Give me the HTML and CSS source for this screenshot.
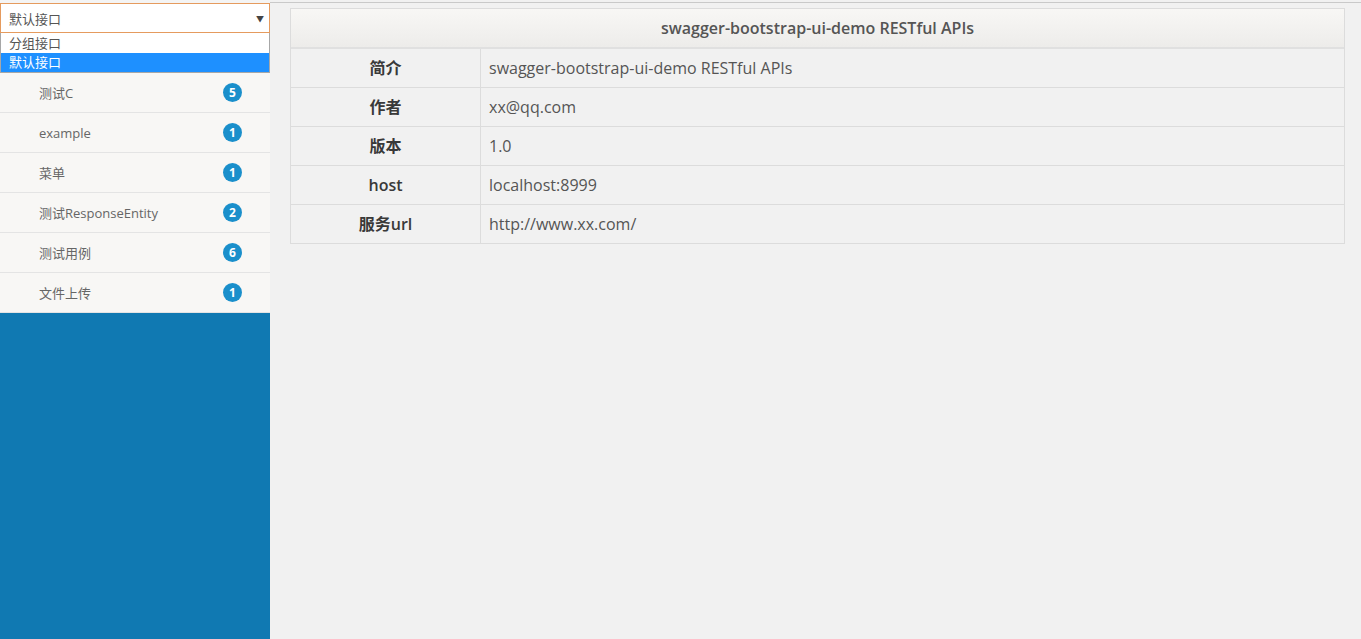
FILE: index.html
```html
<!DOCTYPE html>
<html>
<head>
    <title>swagger-bootstrap-ui</title>
    <meta charset="utf-8">
    <link rel="stylesheet" href="styles.css">
</head>
<body>
    <div class="sidebar">
        <div class="group-box">
            <div class="group-select">
                <span>默认接口</span>
                <span class="arrow">▼</span>
            </div>
            <div class="group-options">
                <div class="option">分组接口</div>
                <div class="option selected">默认接口</div>
            </div>
        </div>
        <ul class="menu">
            <li><span>测试C</span><span class="badge">5</span></li>
            <li><span>example</span><span class="badge">1</span></li>
            <li><span>菜单</span><span class="badge">1</span></li>
            <li><span>测试ResponseEntity</span><span class="badge">2</span></li>
            <li><span>测试用例</span><span class="badge">6</span></li>
            <li><span>文件上传</span><span class="badge">1</span></li>
        </ul>
    </div>
    <div class="main">
        <div class="content">
            <div class="info">
                <div class="info-head">swagger-bootstrap-ui-demo RESTful APIs</div>
                <div class="info-row"><div class="label">简介</div><div class="value">swagger-bootstrap-ui-demo RESTful APIs</div></div>
                <div class="info-row"><div class="label">作者</div><div class="value">xx@qq.com</div></div>
                <div class="info-row"><div class="label">版本</div><div class="value">1.0</div></div>
                <div class="info-row"><div class="label">host</div><div class="value">localhost:8999</div></div>
                <div class="info-row"><div class="label">服务url</div><div class="value">http://www.xx.com/</div></div>
            </div>
        </div>
    </div>
</body>
</html>
```

FILE: styles.css
```css
html, body { height: 100%; }
body { margin: 0; display: flex; font-family: "Open Sans", "Noto Sans CJK SC", sans-serif; background-color: #f1f1f1; color: #555; overflow: hidden; }

.sidebar { width: 270px; flex-shrink: 0; background-color: #1079b2; display: flex; flex-direction: column; }
.group-box { background-color: #f4f4f4; padding-top: 3px; }
.group-select { height: 30px; box-sizing: border-box; background: #fff; border: 1px solid #e59b5e;
                display: flex; align-items: center; justify-content: space-between; padding: 0 5px 0 8px; font-size: 13px; color: #555; }
.group-select .arrow { font-size: 8px; color: #444; }
.group-options { background: #fff; border: 1px solid #a7a7a7; border-top: none; padding-top: 1px; font-size: 13px; line-height: 19px; }
.option { padding-left: 8px; color: #555; }
.option.selected { background-color: #1e90ff; color: #fff; }

.menu { list-style: none; margin: 0; padding: 0; background-color: #f8f7f5; }
.menu li { height: 40px; box-sizing: border-box; border-bottom: 1px solid #e4e4e4; display: flex; align-items: center;
           justify-content: space-between; padding: 0 28px 0 39px; font-size: 13px; color: #666; }
.badge { width: 19px; height: 19px; border-radius: 50%; background-color: #1a8fcb; color: #fff; font-size: 12px; font-weight: bold;
         display: flex; align-items: center; justify-content: center; }

.main { flex: 1; padding-top: 2px; }
.content { border-top: 1px solid #c9c9c9; padding: 5px 16px 0 20px; }
.info { border: 1px solid #dcdcdc; border-bottom: none; font-size: 16px; }
.info-head { height: 38px; line-height: 39px; border-bottom: 2px solid #e0e0e0; font-weight: 600; color: #555; text-align: center;
             background: linear-gradient(#f8f7f5, #edecea); }
.info-row { display: flex; height: 39px; box-sizing: border-box; border-bottom: 1px solid #dcdcdc; line-height: 38px; }
.info-row .label { width: 190px; flex-shrink: 0; box-sizing: border-box; border-right: 1px solid #dcdcdc; text-align: center; font-weight: 600; color: #393939; }
.info-row .value { padding-left: 8px; color: #555; }
```
